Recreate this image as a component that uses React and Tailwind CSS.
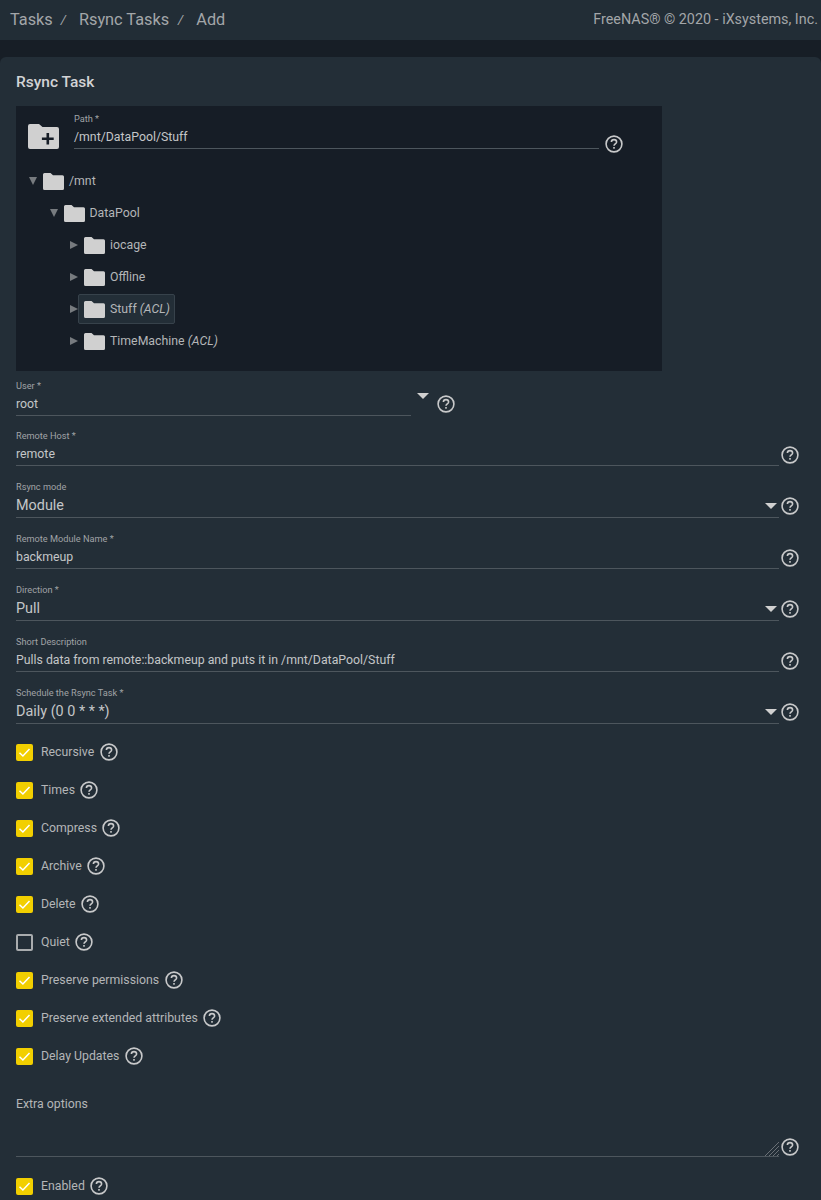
import React from "react";

const Help = ({ className = "" }) => (
  <svg width="20" height="20" viewBox="0 0 20 20" fill="none" className={"shrink-0 " + className}>
    <circle cx="10" cy="10" r="7.9" stroke="#c8c9ca" strokeWidth="1.6" />
    <path d="M7.4 8.1c0-1.5 1.2-2.5 2.6-2.5s2.6 1 2.6 2.3c0 2-2.6 2-2.6 3.9" stroke="#c8c9ca" strokeWidth="1.6" />
    <rect x="9.2" y="13" width="1.6" height="1.7" fill="#c8c9ca" />
  </svg>
);

const Folder = ({ w = 21, h = 17 }) => (
  <svg width={w} height={h} viewBox="0 0 21 17" className="shrink-0">
    <path d="M1.5 0h6l2.5 2.2h9.5a1.5 1.5 0 0 1 1.5 1.5v11.8a1.5 1.5 0 0 1-1.5 1.5h-18A1.5 1.5 0 0 1 0 15.5v-14A1.5 1.5 0 0 1 1.5 0z" fill="#d0d0d0" />
  </svg>
);

const TreeRow = ({ depth, open, name, acl, active }) => (
  <div className="flex items-center h-[32px]" style={{ paddingLeft: depth * 20.5 + 12 }}>
    <span className="w-[10px] flex justify-center mr-[5px]">
      {open ? (
        <span className="w-0 h-0 border-l-[4.5px] border-r-[4.5px] border-t-[8px] border-l-transparent border-r-transparent border-t-[#777b7f]" />
      ) : (
        <span className="w-0 h-0 border-t-[4.5px] border-b-[4.5px] border-l-[8px] border-t-transparent border-b-transparent border-l-[#777b7f]" />
      )}
    </span>
    <span className={"flex items-center h-[30px] -ml-[6px] pl-[5px] pr-[4px] rounded-[2px] border " + (active ? "bg-[#232e37] border-[#37424b]" : "border-transparent")}>
      <Folder />
      <span className="ml-[5px] text-[12.3px] text-[#b4b6b8]">
        {name} {acl && <em>(ACL)</em>}
      </span>
    </span>
  </div>
);

const Field = ({ label, value, select, mt, big }) => (
  <div className="flex items-start" style={{ marginTop: mt }}>
    <div className="w-[763px] ml-[16px]">
      <div className="h-[12px] text-[9.2px] leading-[12px] text-[#a0a3a6]">{label}</div>
      <div className={"flex items-center justify-between pt-[2px] border-b border-[#4d565d] " + (big ? "h-[25px] text-[14.4px]" : "h-[24px] text-[12.3px]") + " text-[#c4c6c8]"}>
        <span>{value}</span>
        {select && <span className="mr-[2px] w-0 h-0 border-l-[6px] border-r-[6px] border-t-[6px] border-l-transparent border-r-transparent border-t-[#d0d0d0]" />}
      </div>
    </div>
    <Help className="ml-[1px] mt-[15px]" />
  </div>
);

const Check = ({ label, checked = true }) => (
  <div className="flex items-center h-[38px] pl-[16px]">
    {checked ? (
      <span className="w-[17px] h-[17px] rounded-[2px] bg-[#f2cf00] flex items-center justify-center">
        <svg width="13" height="13" viewBox="0 0 13 13" fill="none">
          <path d="M1.5 6.8l3.4 3.2 6.6-7" stroke="#fff" strokeWidth="1.5" />
        </svg>
      </span>
    ) : (
      <span className="w-[17px] h-[17px] rounded-[2px] border-2 border-[#a9acae]" />
    )}
    <span className="ml-[8px] text-[12.3px] text-[#b4b6b8]">{label}</span>
    <Help className="ml-[4.5px]" />
  </div>
);

export default function App() {
  return (
    <div className="w-[821px] h-[1200px] overflow-hidden bg-[#171e26] font-['Roboto',sans-serif]">
      <header className="h-[40px] bg-[#222d36] flex items-center justify-between pl-[10px] pr-[3px] text-[#a3a6a9]">
        <nav className="flex items-center text-[16.3px]">
          <span>Tasks</span>
          <span className="ml-[8px] text-[13px] italic">/</span>
          <span className="ml-[13px]">Rsync Tasks</span>
          <span className="ml-[9px] text-[13px] italic">/</span>
          <span className="ml-[13px]">Add</span>
        </nav>
        <span className="text-[14.35px]">FreeNAS® © 2020 - iXsystems, Inc.</span>
      </header>

      <main className="mt-[17px] h-[1143px] bg-[#232e37] rounded-t-[6px] pt-[16px]">
        <h1 className="pl-[16px] text-[15.5px] leading-[18px] font-medium text-[#d2d3d5]">Rsync Task</h1>

        <section className="mt-[15px] ml-[16px] w-[646px] h-[265px] bg-[#161d26]">
          <div className="flex items-start pl-[12px] pt-[7px]">
            <svg width="31" height="25" viewBox="0 0 31 25" className="mt-[11px] shrink-0">
              <path d="M2 0h9l3.5 3H29a2 2 0 0 1 2 2v18a2 2 0 0 1-2 2H2a2 2 0 0 1-2-2V2a2 2 0 0 1 2-2z" fill="#d0d0d0" />
              <path d="M18.5 9h2.6v4.6h4.6v2.4h-4.6v4.6h-2.6V16h-4.6v-2.4h4.6z" fill="#161d26" />
            </svg>
            <div className="ml-[15px] w-[525px]">
              <div className="h-[12px] text-[9.2px] leading-[12px] text-[#a0a3a6]">Path *</div>
              <div className="h-[22px] mt-[2px] border-b border-[#4d565d] text-[12.3px] leading-[20px] text-[#c4c6c8]">/mnt/DataPool/Stuff</div>
            </div>
            <Help className="ml-[5px] mt-[21px]" />
          </div>
          <div className="mt-[11px]">
            <TreeRow depth={0} open name="/mnt" />
            <TreeRow depth={1} open name="DataPool" />
            <TreeRow depth={2} name="iocage" />
            <TreeRow depth={2} name="Offline" />
            <TreeRow depth={2} name="Stuff" acl active />
            <TreeRow depth={2} name="TimeMachine" acl />
          </div>
        </section>

        <div className="flex items-start mt-[9px]">
          <div className="w-[395px] ml-[16px]">
            <div className="h-[12px] text-[9.2px] leading-[12px] text-[#a0a3a6]">User *</div>
            <div className="h-[24px] flex items-center pt-[2px] border-b border-[#4d565d] text-[12.3px] text-[#c4c6c8]">root</div>
          </div>
          <span className="ml-[6px] mt-[13px] w-0 h-0 border-l-[6px] border-r-[6px] border-t-[6px] border-l-transparent border-r-transparent border-t-[#d0d0d0]" />
          <Help className="ml-[6.5px] mt-[14px]" />
        </div>

        <Field mt={14} label="Remote Host *" value="remote" />
        <Field mt={15} label="Rsync mode" value="Module" select big />
        <Field mt={15} label="Remote Module Name *" value="backmeup" />
        <Field mt={15} label="Direction *" value="Pull" select big />
        <Field mt={15} label="Short Description" value="Pulls data from remote::backmeup and puts it in /mnt/DataPool/Stuff" />
        <Field mt={15} label="Schedule the Rsync Task *" value="Daily (0 0 * * *)" select big />

        <div className="mt-[9px]">
          <Check label="Recursive" />
          <Check label="Times" />
          <Check label="Compress" />
          <Check label="Archive" />
          <Check label="Delete" />
          <Check label="Quiet" checked={false} />
          <Check label="Preserve permissions" />
          <Check label="Preserve extended attributes" />
          <Check label="Delay Updates" />
        </div>

        <div className="flex items-start mt-[21px]">
          <div className="w-[763px] ml-[16px] h-[61px] border-b border-[#4d565d] relative">
            <div className="text-[12.3px] leading-[16px] text-[#b4b6b8]">Extra options</div>
            <svg width="14" height="14" viewBox="0 0 14 14" className="absolute right-0 bottom-0">
              <path d="M0 14L14 0M4 14L14 4M8 14l6-6M12 14l2-2" stroke="#6a7076" strokeWidth="1" />
            </svg>
          </div>
          <Help className="ml-[1px] mt-[41px]" />
        </div>

        <div className="mt-[10px]">
          <Check label="Enabled" />
        </div>
      </main>
    </div>
  );
}
